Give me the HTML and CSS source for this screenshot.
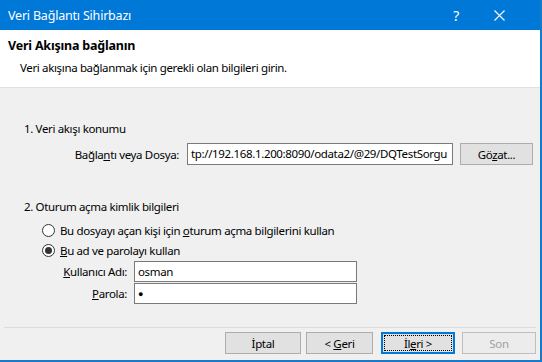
FILE: index.html
```html
<!DOCTYPE html>
<html lang="tr">

<head>
    <meta charset="UTF-8">
    <title>Veri Bağlantı Sihirbazı</title>
    <link rel="stylesheet" href="styles.css">
</head>

<body>
    <div class="window">
        <div class="titlebar">
            <span class="title">Veri Bağlantı Sihirbazı</span>
            <span class="help">?</span>
            <span class="close">
                <svg width="11" height="11" viewBox="0 0 11 11"><path d="M0.5 0.5L10.5 10.5M10.5 0.5L0.5 10.5" stroke="#fff" stroke-width="1.1" fill="none"/></svg>
            </span>
        </div>

        <div class="header">
            <h2>Veri Akışına bağlanın</h2>
            <p>Veri akışına bağlanmak için gerekli olan bilgileri girin.</p>
        </div>

        <div class="content">
            <div class="section-title first">1. Veri akışı konumu</div>
            <div class="row url-row">
                <label class="url-label">Bağla<u>n</u>tı veya Dosya:</label>
                <div class="field url-field">tp://192.168.1.200:8090/odata2/@29/DQTestSorgu</div>
                <div class="btn browse"><span>Gö<u>z</u>at...</span></div>
            </div>

            <div class="section-title second">2. Oturum açma kimlik bilgileri</div>
            <div class="radio-row">
                <span class="radio"></span>
                <span>Bu dosyayı açan kişi için <u>o</u>turum açma bilgilerini kullan</span>
            </div>
            <div class="radio-row">
                <span class="radio checked"></span>
                <span><u>B</u>u ad ve parolayı kullan</span>
            </div>
            <div class="cred-row">
                <label class="cred-label"><u>K</u>ullanıcı Adı:</label>
                <div class="field cred-field">osman</div>
            </div>
            <div class="cred-row">
                <label class="cred-label"><u>P</u>arola:</label>
                <div class="field cred-field dot">●</div>
            </div>
        </div>

        <div class="footer">
            <div class="btn cancel"><span>İptal</span></div>
            <div class="btn back"><span>&lt; <u>G</u>eri</span></div>
            <div class="btn default"><span class="focus"><span>İl<u>e</u>ri &gt;</span></span></div>
            <div class="btn disabled"><span>Son</span></div>
        </div>
    </div>
</body>

</html>
```

FILE: styles.css
```css
body {
    margin: 0;
    font-family: 'Noto Sans', 'Open Sans', sans-serif;
    font-size: 11.5px;
    letter-spacing: -0.35px;
    color: #000;
    background-color: #fff;
}

.window {
    width: 542px;
    height: 362px;
    box-sizing: border-box;
    border-right: 2px solid #1979ca;
    border-bottom: 2px solid #1979ca;
    background-color: #f0f0f0;
    display: flex;
    flex-direction: column;
}

.titlebar {
    height: 30px;
    background-color: #0078d7;
    color: #fff;
    display: flex;
    align-items: center;
    padding: 0 18px 0 8px;
    flex-shrink: 0;
}

.title {
    flex: 1;
    font-size: 12.5px;
    letter-spacing: -0.2px;
}

.help {
    width: 40px;
    text-align: center;
    font-size: 14px;
}

.close {
    width: 46px;
    display: flex;
    justify-content: center;
}

.header {
    background-color: #fff;
    height: 58px;
    box-sizing: border-box;
    padding: 7px 8px 0;
    border-bottom: 1px solid #dfdfdf;
}

.header h2 {
    margin: 0;
    font-size: 12.5px;
    letter-spacing: -0.2px;
    font-weight: bold;
    line-height: 18px;
}

.header p {
    margin: 5px 0 0 12px;
    line-height: 16px;
}

.content {
    flex: 1;
    padding-left: 24px;
}

.section-title {
    line-height: 16px;
}

.section-title.first {
    margin-top: 33px;
}

.section-title.second {
    margin-top: 34px;
}

.url-row {
    display: flex;
    align-items: center;
    margin-top: 6px;
}

.url-label {
    width: 155px;
    text-align: right;
    margin-right: 8px;
}

.field {
    background-color: #fff;
    border: 1px solid #7a7a7a;
    box-sizing: border-box;
    height: 22px;
    line-height: 20px;
    padding-left: 3px;
    white-space: nowrap;
    overflow: hidden;
}

.url-field {
    width: 266px;
}

.btn {
    width: 74px;
    height: 22px;
    box-sizing: border-box;
    border: 1px solid #adadad;
    background-color: #e1e1e1;
    display: flex;
    align-items: center;
    justify-content: center;
}

.browse {
    width: 73px;
    margin-left: 7px;
}

.radio-row {
    display: flex;
    align-items: center;
    height: 20px;
    margin-left: 18px;
}

.section-title.second + .radio-row {
    margin-top: 5px;
}

.radio {
    width: 11px;
    height: 11px;
    border: 1px solid #333;
    border-radius: 50%;
    background-color: #fff;
    margin-right: 5px;
    position: relative;
    flex-shrink: 0;
}

.radio.checked::after {
    content: "";
    position: absolute;
    left: 2px;
    top: 2px;
    width: 7px;
    height: 7px;
    border-radius: 50%;
    background-color: #333;
}

.cred-row {
    display: flex;
    align-items: center;
    margin-top: 1px;
}

.cred-label {
    width: 103px;
    text-align: right;
    margin-right: 7px;
}

.cred-field {
    width: 223px;
    height: 21px;
    line-height: 19px;
}

.dot {
    font-size: 9px;
}

.footer {
    height: 33px;
    margin: 0 4px 0 4px;
    border-top: 1px solid #dcdcdc;
    display: flex;
    justify-content: flex-end;
    align-items: flex-start;
    padding-top: 4px;
    box-sizing: border-box;
}

.btn.cancel {
    width: 76px;
}

.btn.back {
    width: 67px;
    margin-left: 5px;
}

.btn.default {
    width: 74px;
    margin-left: 8px;
    border: 2px solid #0078d7;
}

.focus {
    border: 1px dotted #000;
    width: 66px;
    height: 14px;
    display: flex;
    align-items: center;
    justify-content: center;
}

.btn.disabled {
    color: #a0a0a0;
    border-color: #bfbfbf;
    background-color: #ececec;
    margin-left: 7px;
}
```
